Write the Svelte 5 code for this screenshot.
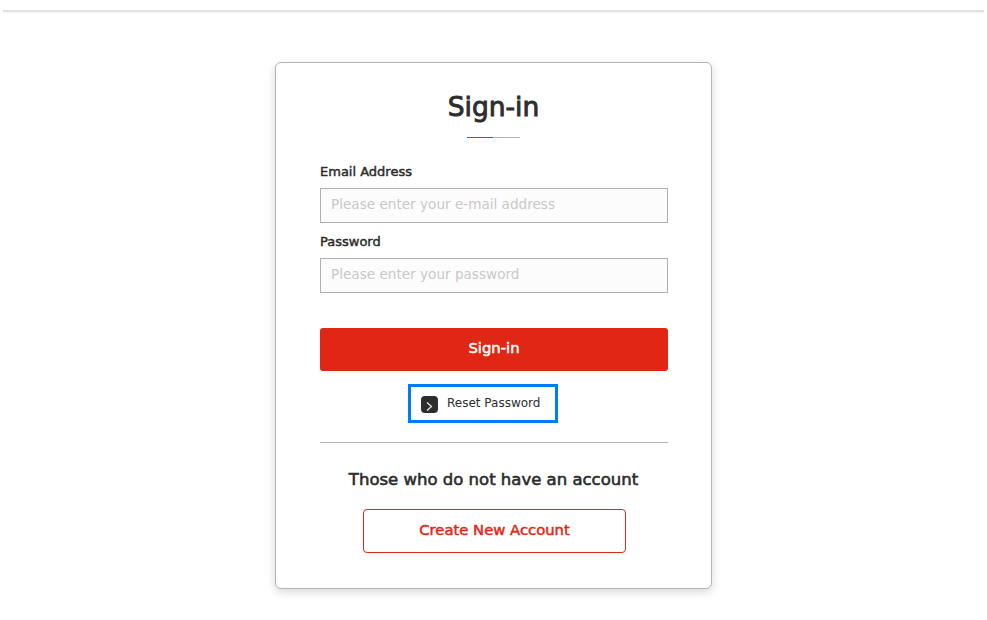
<script>
  let email = $state('')
  let password = $state('')
</script>

<div class="page">
  <div class="topline"></div>
  <main class="card">
    <h1>Sign-in</h1>
    <div class="rule"><span></span></div>

    <label for="email">Email Address</label>
    <input id="email" type="text" placeholder="Please enter your e-mail address" bind:value={email} />

    <label for="password" class="second">Password</label>
    <input id="password" type="password" placeholder="Please enter your password" bind:value={password} />

    <button class="submit" type="button">Sign-in</button>

    <a class="reset" href="#reset">
      <span class="arrow">
        <svg width="17" height="17" viewBox="0 0 17 17"><path d="M6 6.5 L10.5 10.5 L6 14.5" fill="none" stroke="#eee" stroke-width="1.2" /></svg>
      </span>
      Reset Password
    </a>

    <hr />

    <h2>Those who do not have an account</h2>
    <button class="create" type="button">Create New Account</button>
  </main>
</div>

<style>
  :global(body) {
    margin: 0;
    background: #fff;
    font-family: "DejaVu Sans", Verdana, sans-serif;
    color: #2d2d2d;
  }

  .page {
    height: 620px;
    overflow: hidden;
    display: flex;
    flex-direction: column;
    align-items: center;
  }

  .topline {
    align-self: stretch;
    height: 2px;
    margin: 10px 3px 0 3px;
    background: #e2e2e2;
    box-shadow: 0 1px 2px rgba(0, 0, 0, 0.06);
  }

  .card {
    box-sizing: border-box;
    width: 437px;
    height: 527px;
    margin: 50px 0 0 0;
    padding: 29px 44px 0;
    display: flex;
    flex-direction: column;
    background: #fff;
    border: 1px solid #b4b4b4;
    border-radius: 6px;
    box-shadow: 0 3px 10px rgba(0, 0, 0, 0.16);
  }

  h1 {
    margin: 0;
    font-size: 26.5px;
    line-height: 30px;
    font-weight: 400;
    -webkit-text-stroke-width: 0.9px;
    text-align: center;
  }

  .rule {
    width: 53px;
    height: 1px;
    margin: 15px auto 26px;
    background: #b4b4b4;
  }

  .rule span {
    display: block;
    width: 26px;
    height: 1px;
    background: #e8271a;
  }

  label {
    font-size: 13px;
    line-height: 16px;
    font-weight: 400;
    -webkit-text-stroke-width: 0.45px;
    margin-bottom: 8px;
  }

  label.second {
    margin-top: 11px;
  }

  input {
    box-sizing: border-box;
    width: 348px;
    height: 35px;
    padding: 0 10px 3px;
    border: 1px solid #b0b0b0;
    border-radius: 0;
    outline: none;
    background: #fcfcfc;
    font-family: inherit;
    font-size: 13.6px;
    color: #2d2d2d;
  }

  input::placeholder {
    color: #c8c8c8;
    opacity: 1;
  }

  .submit {
    width: 348px;
    height: 43px;
    margin-top: 35px;
    padding-bottom: 6px;
    border: 0;
    border-radius: 3px;
    background: #e02714;
    color: #fff;
    font-family: inherit;
    font-size: 14.8px;
    -webkit-text-stroke-width: 0.5px;
    cursor: pointer;
  }

  .reset {
    box-sizing: border-box;
    align-self: flex-start;
    display: flex;
    align-items: center;
    gap: 9px;
    width: 150px;
    height: 39px;
    margin: 13px 0 0 88px;
    padding-left: 10px;
    padding-bottom: 1px;
    border: 3px solid #007bff;
    color: #2d2d2d;
    font-size: 12px;
    text-decoration: none;
    white-space: nowrap;
  }

  .arrow {
    display: block;
    width: 17px;
    height: 17px;
    margin-top: 3px;
    border-radius: 4px;
    background: #2d2d2d;
  }

  .arrow svg {
    display: block;
  }

  hr {
    width: 348px;
    height: 1px;
    margin: 19px 0 0;
    border: 0;
    background: #b4b4b4;
  }

  h2 {
    margin: 26px 0 0;
    font-size: 16.5px;
    line-height: 22px;
    font-weight: 400;
    -webkit-text-stroke-width: 0.6px;
    text-align: center;
  }

  .create {
    align-self: flex-start;
    width: 263px;
    height: 44px;
    margin: 18px 0 0 43px;
    padding-bottom: 4px;
    border: 1px solid #e02714;
    border-radius: 4px;
    background: #fff;
    color: #e02714;
    font-family: inherit;
    font-size: 14.8px;
    -webkit-text-stroke-width: 0.5px;
    cursor: pointer;
  }
</style>
